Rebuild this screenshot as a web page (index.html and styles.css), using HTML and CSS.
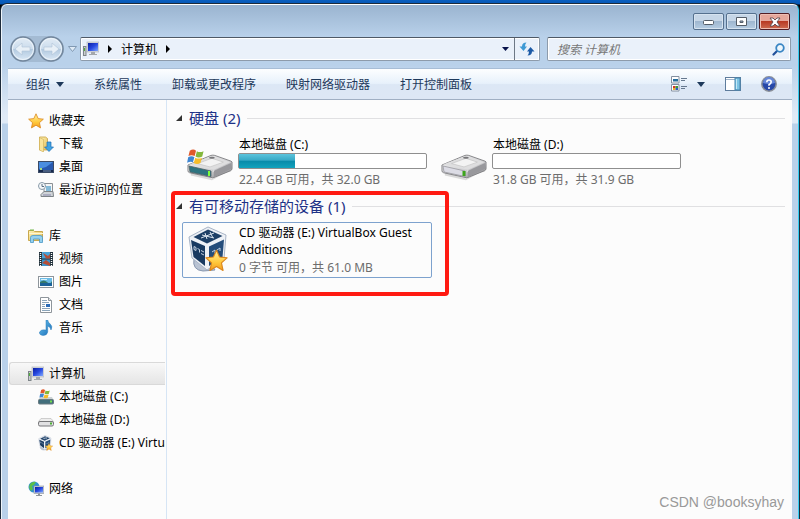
FILE: index.html
```html
<!DOCTYPE html>
<html lang="zh-CN">
  <head>
    <meta charset="UTF-8" />
    <meta name="viewport" content="width=device-width, initial-scale=1.0" />
    <title>计算机</title>
    <link rel="stylesheet" href="styles.css">
  </head>

  <body>
    <!-- shared icons -->
    <svg class="defs" width="0" height="0" aria-hidden="true">
      <defs>
        <linearGradient id="g-metal" x1="0" y1="0" x2="1" y2="1">
          <stop offset="0" stop-color="#f7f7f7" />
          <stop offset=".6" stop-color="#d0d0d2" />
          <stop offset="1" stop-color="#77777b" />
        </linearGradient>
        <linearGradient id="g-screen" x1="0" y1="0" x2="1" y2="1">
          <stop offset="0" stop-color="#0c1fa0" />
          <stop offset=".5" stop-color="#2748e0" />
          <stop offset="1" stop-color="#7fa8ff" />
        </linearGradient>
        <linearGradient id="g-star" x1="0" y1="0" x2="0" y2="1">
          <stop offset="0" stop-color="#fff0a0" />
          <stop offset=".6" stop-color="#ffc93c" />
          <stop offset="1" stop-color="#f39a1e" />
        </linearGradient>
        <linearGradient id="g-circle" x1="0" y1="0" x2="0" y2="1">
          <stop offset="0" stop-color="#e4edf6" />
          <stop offset=".48" stop-color="#cbdcec" />
          <stop offset=".52" stop-color="#b3cae0" />
          <stop offset="1" stop-color="#dbe9f6" />
        </linearGradient>
        <linearGradient id="g-folder" x1="0" y1="0" x2="1" y2="1">
          <stop offset="0" stop-color="#fff3b8" />
          <stop offset="1" stop-color="#e3bd55" />
        </linearGradient>
        <linearGradient id="g-blue" x1="0" y1="0" x2="1" y2="1">
          <stop offset="0" stop-color="#6cc8f2" />
          <stop offset="1" stop-color="#1668b4" />
        </linearGradient>
      </defs>
      <symbol id="i-computer" viewBox="0 0 16 16">
        <rect x=".5" y="5.500" width="2.500" height="9" fill="#c9cdd0" stroke="#7e8589" />
        <rect x="1" y="7" width="1" height="3" fill="#4fae3c" />
        <rect x="4" y="1" width="12" height="10" fill="#d8dade" stroke="#aab0b8" stroke-width=".6" />
        <rect x="5" y="2" width="10" height="8" fill="url(#g-screen)" />
        <path d="M8 11h4v2h2v1H6v-1h2z" fill="#a4a8ad" />
      </symbol>
      <symbol id="i-flag" viewBox="0 0 20 18">
        <path d="M3 2q4-3 7 0L8.500 8Q5 6 1.500 8z" fill="#e0592a" />
        <path d="M11 2.500q3 2 7.500 0L17 8.500q-4 2-7.500 0z" fill="#84b83c" />
        <path d="M1.200 9.200q4-2 7 0L6.500 15Q4 13.500 0 15.500z" fill="#3f86d2" />
        <path d="M9.200 9.800q3.500 2 7.500 0L15 15.800q-4 2-7.500 0z" fill="#f6bd2a" />
      </symbol>
      <symbol id="i-drive" viewBox="0 0 48 32">
        <path d="M4 24l22 6 20-11v2L26 32 4 27z" fill="#999" opacity=".35" />
        <path d="M1 16 25 6q2-.6 4 0l17 6q1.500.6 1 2v6q0 1-1.500 2L28 29q-1.500.6-3 0L2.500 24Q1 23.500 1 22z" fill="url(#g-metal)" stroke="#77777a" stroke-width=".9" />
        <path d="M2 15.500 26 6.500l19 6.500-17 8z" fill="#dededf" />
        <path d="M11 14.500 26 9l12 4-14 5z" fill="#f3f3f3" stroke="#bdbdbd" stroke-width=".6" />
        <path d="M34 20.500q-2 1-7 2" fill="none" stroke="#fff" />
        <ellipse cx="26" cy="8.500" rx="3" ry="1" fill="#77777a" />
        <path d="M46 14v6l-18 9v-7z" fill="#98989c" />
      </symbol>
      <symbol id="i-box" viewBox="0 0 40 48">
        <path d="M6 33Q4 44 15 45l12-1-2-3-8-1z" fill="#b9c3d3" stroke="#8897af" />
        <path d="M1 11 20 1l18 8-2 24-17 11L4 32z" fill="#eef1f6" stroke="#a8b4c6" />
        <path d="M5.500 11 20 3.500 34.500 10 19 17.500z" fill="#1d3f66" />
        <path d="M3 14 17 20v20L5.500 31z" fill="#193a61" />
        <path d="M21 20.500 36 13.500l-1.500 18L21 40z" fill="#244d7b" />
        <path d="M14 9l12 3M13 12l13-5M17 7l2 6M22 6l3 6" stroke="#dce5ef" fill="none" />
        <path d="M6 20.500l2 1v3l-2-1zM9.500 22.500l2 1v3M13 24.500l3 1.500M13 27.500l3 1.500M24 26l3-2v3M29 24l3-2v3" stroke="#c3d0e0" fill="none" />
      </symbol>
      <symbol id="i-star" viewBox="0 0 20 20">
        <path d="M10 1l2.700 6 6.500.7-4.900 4.400 1.400 6.500L10 15.300l-5.700 3.300 1.400-6.500L.8 7.700l6.500-.7z" fill="url(#g-star)" stroke="#dc861c" stroke-linejoin="round" />
      </symbol>
    </svg>

    <div class="window">
      <header class="titlebar">
        <button class="caption-btn" aria-label="最小化">
          <svg width="12" height="6" viewBox="0 0 12 6"><rect x=".5" y="1.500" width="10" height="4" rx="1" fill="#fff" stroke="#545d68" /></svg>
        </button>
        <button class="caption-btn" aria-label="最大化">
          <svg width="12" height="10" viewBox="0 0 12 10"><path d="M.5.500h10v8H.5zM4 4v1.500h3V4z" fill="#fff" fill-rule="evenodd" stroke="#545d68" /></svg>
        </button>
        <button class="caption-btn close" aria-label="关闭">
          <svg width="12" height="10" viewBox="0 0 12 10"><path d="M1 1h3l2 2 2-2h3L8 5l3 4H8L6 7 4 9H1l3-4z" fill="#fff" stroke="#5c4a50" stroke-width=".9" /></svg>
        </button>
      </header>

      <div class="navbar">
        <div class="history">
          <button aria-label="后退">
            <svg width="26" height="26" viewBox="0 0 26 26"><circle cx="13" cy="13" r="12" fill="url(#g-circle)" stroke="#72869c" stroke-width="1.500" /><circle cx="13" cy="13" r="10.500" fill="none" stroke="#edf4fa" /><path d="M5 13l7-6v4h8v4h-8v4z" fill="#e8f0f7" stroke="#aec2d6" stroke-width=".6" /></svg>
          </button>
          <button aria-label="前进">
            <svg width="26" height="26" viewBox="0 0 26 26"><circle cx="13" cy="13" r="12" fill="url(#g-circle)" stroke="#72869c" stroke-width="1.500" /><circle cx="13" cy="13" r="10.500" fill="none" stroke="#edf4fa" /><path d="M21 13l-7-6v4H6v4h8v4z" fill="#e8f0f7" stroke="#aec2d6" stroke-width=".6" /></svg>
          </button>
        </div>
        <button class="recent" aria-label="最近页面">
          <svg width="9" height="6" viewBox="0 0 9 6"><path d="M.5.500h8L4.500 5.500z" fill="#dfeaf5" stroke="#8199b3" /></svg>
        </button>
        <div class="address">
          <svg class="icon16" viewBox="0 0 16 16"><use href="#i-computer" /></svg>
          <svg class="crumb-arrow" viewBox="0 0 4 8"><path d="M0 0l4 4-4 4z" /></svg>
          <a href="#">计算机</a>
          <svg class="crumb-arrow" viewBox="0 0 4 8"><path d="M0 0l4 4-4 4z" /></svg>
          <button class="drop" aria-label="以前的位置"><svg width="7" height="4" viewBox="0 0 7 4"><path d="M0 0h7L3.500 4z" fill="#07124a" /></svg></button>
          <button class="refresh" aria-label="刷新">
            <svg width="16" height="14" viewBox="0 0 16 14"><path d="M7.500.500Q3 .5 3 4.500H.5l4 4.500 3.500-4.500H6q0-2.500 1.500-4z" fill="#3f9ad4" /><path d="M8.500 13.500q4.500 0 4.500-4h2.500l-4-4.500L8 9.500h2q0 2.500-1.500 4z" fill="#1c5aa6" /></svg>
          </button>
        </div>
        <div class="search">
          <input type="search" placeholder="搜索 计算机" aria-label="搜索 计算机">
          <svg width="13" height="13" viewBox="0 0 13 13"><path d="M1.500 11.500L5.500 7.500" stroke="#22509a" stroke-width="2.200" stroke-linecap="round" /><circle cx="8" cy="5" r="3.800" fill="#eef7fd" stroke="#3a86c4" stroke-width="1.800" /></svg>
        </div>
      </div>

      <div class="toolbar">
        <button>组织 <svg class="tri" viewBox="0 0 8 5"><path d="M0 0h8L4 5z" /></svg></button>
        <button>系统属性</button>
        <button>卸载或更改程序</button>
        <button>映射网络驱动器</button>
        <button>打开控制面板</button>
        <div class="tools">
          <button class="view" aria-label="更改您的视图">
            <svg width="17" height="16" viewBox="0 0 17 16"><path d="M.5.500h7.500v6.500H.5zM.5 8.500h7.500V15H.5z" fill="#fff" stroke="#8490a0" /><path d="M2 3h5v2.500H2z" fill="#246c9c" /><path d="M2 10h2.500v2H2z" fill="#d83228" /><path d="M4.500 10H7v2H4.500z" fill="#3c9a38" /><path d="M2 12h2.500v2H2z" fill="#e9b52a" /><path d="M4.500 12H7v2H4.500z" fill="#2f5cc2" /><path d="M10 2.500h6M10 4.500h4M10 10.500h6M10 12.500h4" stroke="#66788e" /></svg>
            <svg class="tri" viewBox="0 0 8 5"><path d="M0 0h8L4 5z" /></svg>
          </button>
          <button aria-label="预览窗格">
            <svg width="16" height="14" viewBox="0 0 16 14"><rect x=".5" y=".5" width="15" height="13" fill="#fff" stroke="#5e7c9c" /><path d="M1 2.500h9" stroke="#9fb4ca" /><rect x="10" y="1" width="5" height="12" fill="#7cc4e4" stroke="#4785ae" /><path d="M11.500 2v10" stroke="#c3e8f6" /></svg>
          </button>
          <button aria-label="帮助">
            <svg width="16" height="16" viewBox="0 0 16 16"><circle cx="8" cy="8" r="7.200" fill="#2748a8" stroke="#8b9098" stroke-width="1.500" /><path d="M2 7a6 6 0 0 1 12 0Q8 9 2 7z" fill="#6687d8" /><path d="M5.800 6.200Q5.800 4 8 4t2.200 2Q10.200 7.500 8 8.800v.9" fill="none" stroke="#fff" stroke-width="1.600" /><circle cx="8" cy="12" r="1" fill="#fff" /></svg>
          </button>
        </div>
      </div>

      <div class="content">
        <nav class="sidebar">
          <ul>
            <li><a href="#"><svg class="icon16" viewBox="0 0 20 20"><use href="#i-star" /></svg>收藏夹</a></li>
            <li class="child"><a href="#">
              <svg class="icon16" viewBox="0 0 16 16"><path d="M1.500 1h6l2 1.500V14H1.500z" fill="url(#g-folder)" stroke="#c8a243" stroke-width=".8" /><path d="M1.500 1.500l4 2V16l-4-2z" fill="#f9e49a" stroke="#cfae56" stroke-width=".6" /><path d="M9 6h4v5h2.500l-4.500 4.500L6.500 11H9z" fill="#41a3e2" stroke="#1e6fb4" stroke-width=".7" /></svg>下载</a></li>
            <li class="child"><a href="#">
              <svg class="icon16" viewBox="0 0 16 16"><rect x=".5" y="2.500" width="15" height="11" fill="#2759b0" stroke="#3b4b66" /><path d="M1 3h14L8 8l-7 2z" fill="#4a8ee0" /><path d="M1 11h14v2H1z" fill="#17294d" /><rect x="2" y="9" width="2" height="2" fill="#a7dc82" /><path d="M5 12h8" stroke="#7d96b8" /></svg>桌面</a></li>
            <li class="child"><a href="#">
              <svg class="icon16" viewBox="0 0 16 16"><path d="M6 1.500h8.500v10H6z" fill="#f4f5f6" stroke="#8b9095" /><path d="M8 4h5v5H8z" fill="#85bad8" /><path d="M3 12.500l3-3h9l.5 5H3z" fill="#d0d4d8" stroke="#7d8388" /><path d="M5 13h8" stroke="#88a" /><circle cx="4" cy="4" r="3.500" fill="#f5f8fa" stroke="#899aa8" /><path d="M4 2v2.500h2" fill="none" stroke="#596d80" /></svg>最近访问的位置</a></li>
          </ul>
          <ul>
            <li><a href="#">
              <svg class="icon16" viewBox="0 0 16 16"><path d="M.5 2.500h5l1 1h8v9H.5z" fill="url(#g-folder)" stroke="#c9a84c" /><path d="M2 1.500h4v1H2z" fill="#70b64a" /><path d="M1 5.500h14" stroke="#fff6cf" /><path d="M2.500 14.500v-5Q2.500 7.500 5 7.500h7q2.500 0 2.500 2v5h-3v-3.500h-6v3.500z" fill="#94d0ee" stroke="#4a98c8" stroke-width=".8" /></svg>库</a></li>
            <li class="child"><a href="#">
              <svg class="icon16" viewBox="0 0 16 16"><path d="M1 1h14v14H1z" fill="#20303a" /><path d="M4 1h8v6.500H4z" fill="#4aa3d8" /><path d="M4 8.500h8V15H4z" fill="#3e92ca" /><path d="M5 2l5 3 2-2v4.500H8zM4 12l4-3 4 3v3z" fill="#b44e37" /><path d="M2.500 2v13M13.500 2v13" stroke="#fff" stroke-width="1.400" stroke-dasharray="1 1" /></svg>视频</a></li>
            <li class="child"><a href="#">
              <svg class="icon16" viewBox="0 0 16 16"><rect x=".5" y="2.500" width="15" height="11" fill="#fff" stroke="#8e959b" /><path d="M2 4h12v8H2z" fill="#6bbbe5" /><path d="M2 8q4-3 7 0t5-1v2H2z" fill="#33786a" /><path d="M2 9h12v3H2z" fill="#1c6298" /><path d="M3 5h6v1H3z" fill="#d7f1fb" /></svg>图片</a></li>
            <li class="child"><a href="#">
              <svg class="icon16" viewBox="0 0 16 16"><path d="M2.500.500h8l3 3v12h-11z" fill="#fff" stroke="#8e959b" /><path d="M10.500.500v3h3" fill="#e2e6e9" stroke="#8e959b" /><path d="M4 3.500h5M4 5.500h7M4 7.500h3M4 9.500h3M4 11.500h8M4 13.500h8" stroke="#8ba5ba" /><path d="M8 7h4v3H8z" fill="#2c6cb8" /></svg>文档</a></li>
            <li class="child"><a href="#">
              <svg class="icon16" viewBox="0 0 16 16"><path d="M8 0h1.700q.3 2.500 2.500 4 2.800 2.500.8 6-.3-3-3.300-4v6Q9 15.500 5 15.500 1 15 1.500 12 3 9 8 10z" fill="url(#g-blue)" stroke="#2c7cba" stroke-width=".5" /></svg>音乐</a></li>
          </ul>
          <ul>
            <li><a href="#" class="selected"><svg class="icon16" viewBox="0 0 16 16"><use href="#i-computer" /></svg>计算机</a></li>
            <li class="child"><a href="#">
              <svg class="icon16" viewBox="0 0 16 16"><path d="M2 8h12l1.500 3H.5z" fill="#ccd2d4" /><rect x=".5" y="10.500" width="15" height="4.500" rx="1" fill="#426e7c" stroke="#697b81" /><rect x="12" y="11.500" width="2" height="2" fill="#72e04c" /><use href="#i-flag" x="1" y="0" width="12" height="10" /></svg>本地磁盘 (C:)</a></li>
            <li class="child"><a href="#">
              <svg class="icon16" viewBox="0 0 16 16"><path d="M3 6.500h10l2.500 3H.5z" fill="#eee" stroke="#b4b4b4" stroke-width=".6" /><rect x=".5" y="9.500" width="15" height="4.500" rx="1.500" fill="#e1e1e3" stroke="#77777a" /><rect x="12" y="10.500" width="2" height="2" fill="#4cae34" /></svg>本地磁盘 (D:)</a></li>
            <li class="child"><a href="#">
              <svg class="icon16" viewBox="0 0 16 16"><use href="#i-box" x="0" y="0" width="14" height="16" /><use href="#i-star" x="7" y="8" width="8" height="8" /></svg>CD 驱动器 (E:) VirtualBox Guest Additions</a></li>
          </ul>
          <ul>
            <li><a href="#">
              <svg class="icon16" viewBox="0 0 16 16"><circle cx="6" cy="6" r="5.500" fill="#2c92cf" /><path d="M2 3q3-3 6-2L6 4 4 5l1 3-2 2Q0 7 2 3z" fill="#5cbf48" /><rect x="6" y="5" width="10" height="7.500" fill="#cdd1d6" stroke="#8b939c" stroke-width=".6" /><rect x="7" y="6" width="8" height="5.500" fill="url(#g-screen)" /><path d="M10 12.500h2v1.500h2v1H8v-1h2z" fill="#8d949b" /></svg>网络</a></li>
          </ul>
        </nav>

        <main class="files">
          <section class="group">
            <h2><svg class="expand" viewBox="0 0 6 6"><path d="M6 0v6H0z" /></svg>硬盘 (2)</h2>
            <div class="tiles">
              <a href="#" class="tile">
                <svg class="tile-icon" viewBox="0 0 48 48"><use href="#i-drive" x="0" y="11" width="46" height="32" /><path d="M2 28l22 5v5.500L3 34z" fill="#2d7480" stroke="#4b5f65" stroke-width=".8" /><path d="M22 33v5" stroke="#7dff3c" stroke-width="2" /><use href="#i-flag" x="0" y="11" width="18" height="16" /></svg>
                <span class="info">
                  <span class="name">本地磁盘 (C:)</span>
                  <span class="bar"><span class="fill" style="width: 30%"></span></span>
                  <span class="detail">22.4 GB 可用，共 32.0 GB</span>
                </span>
              </a>
              <a href="#" class="tile">
                <svg class="tile-icon" viewBox="0 0 48 48"><use href="#i-drive" x="0" y="11" width="46" height="32" /><path d="M2 28l22 5v5.500L3 34z" fill="#dcdce5" stroke="#98989e" stroke-width=".8" /><path d="M23 33v5" stroke="#3da51c" stroke-width="3" /></svg>
                <span class="info">
                  <span class="name">本地磁盘 (D:)</span>
                  <span class="bar"></span>
                  <span class="detail">31.8 GB 可用，共 31.9 GB</span>
                </span>
              </a>
            </div>
          </section>
          <section class="group marked">
            <h2><svg class="expand" viewBox="0 0 6 6"><path d="M6 0v6H0z" /></svg>有可移动存储的设备 (1)</h2>
            <div class="tiles">
              <a href="#" class="tile focused">
                <svg class="tile-icon" viewBox="0 0 48 48"><use href="#i-box" x="1" y="0" width="40" height="48" /><use href="#i-star" x="18" y="23" width="23" height="23" /></svg>
                <span class="info">
                  <span class="name">CD 驱动器 (E:) VirtualBox Guest Additions</span>
                  <span class="detail">0 字节 可用，共 61.0 MB</span>
                </span>
              </a>
            </div>
          </section>
        </main>
      </div>
      <p class="watermark">CSDN @booksyhay</p>
    </div>
  </body>
</html>
```
FILE: styles.css
```css
*,
*::before,
*::after {
  box-sizing: border-box;
}

body {
  margin: 0;
  padding: 4px 1px 0;
  min-height: 100vh;
  display: flex;
  background: linear-gradient(#0a5fc0 0, #0657b4 4px, #000 5px, #000);
  font: 12px/17px "Noto Sans", "Noto Sans CJK SC", sans-serif;
  color: #000;
}

button {
  border: 0;
  padding: 0;
  background: none;
  font: inherit;
  color: inherit;
  display: flex;
  align-items: center;
}

a {
  color: inherit;
  text-decoration: none;
}

svg {
  flex: none;
}

.defs {
  position: absolute;
}

.icon16 {
  width: 16px;
  height: 16px;
}

/* window frame */
.window {
  position: relative;
  flex: 1;
  min-width: 0;
  display: flex;
  flex-direction: column;
  padding: 0 6px;
  border: 1px solid #eef5fb;
  border-top-color: #fff;
  border-right-color: #35cdf2;
  border-bottom: 0;
  border-radius: 6px 6px 0 0;
  box-shadow: 0 0 0 1px #1d2b3b;
  background: linear-gradient(#9ab4d0, #b9d1ea 32px, #b9d1ea 60px, #dfeaf6 110px, #dfeaf6 118px, #b9d1ea 119px);
}

.titlebar {
  display: flex;
  justify-content: flex-end;
  gap: 2px;
  height: 31px;
  padding: 8px 2px 0;
}

.caption-btn {
  width: 31px;
  height: 17px;
  justify-content: center;
  border: 1px solid #55708e;
  border-radius: 2px;
  background: linear-gradient(#c6d6e7 45%, #9fb7d0 50%, #b6cde3);
  box-shadow: inset 0 0 0 1px #d6e3f0;
}

.close {
  border-color: #521d24;
  background: linear-gradient(#e5a79b 45%, #b83a24 50%, #ce6b50);
  box-shadow: inset 0 0 0 1px #eebdb2;
}

.navbar {
  display: flex;
  align-items: center;
  gap: 4px;
  padding: 0 1px 6px 2px;
}

.history {
  display: flex;
  gap: 2px;
  border-radius: 14px;
  background: #a4bbd3;
}

.recent {
  width: 8px;
}

.address,
.search {
  display: flex;
  align-items: center;
  height: 24px;
  border: 1px solid #8d9bab;
  border-top-color: #4e5966;
  border-radius: 2px;
  background: #eaf1fa;
  box-shadow: inset 0 0 0 1px #fff;
}

.address {
  flex: 2 1 0;
  gap: 9px;
  padding-left: 2px;
}

.crumb-arrow {
  width: 4px;
  height: 8px;
}

.drop {
  margin-left: auto;
}

.drop,
.refresh {
  height: 22px;
}

.refresh {
  width: 25px;
  margin-left: -4px;
  justify-content: center;
  border-left: 1px solid #6d7885;
}

.search {
  flex: 1 1 0;
  margin-left: 3px;
  padding: 0 5px 0 9px;
}

.search input {
  flex: 1;
  min-width: 0;
  border: 0;
  padding: 0;
  outline: 0;
  background: none;
  font: inherit;
  font-style: italic;
}

.search input::placeholder {
  color: #777;
}

.toolbar {
  display: flex;
  align-items: center;
  gap: 30px;
  height: 32px;
  padding: 0 15px 0 18px;
  border-top: 1px solid #a7bdd6;
  border-bottom: 1px solid #a0afc3;
  background: linear-gradient(#fdfeff, #e7f1fb 48%, #dce7f5 52%, #dde7f5);
  color: #1e395b;
}

.toolbar button {
  gap: 6px;
}

.tri {
  width: 8px;
  height: 5px;
  fill: #1e395b;
}

.tools {
  display: flex;
  align-items: center;
  gap: 20px;
  margin-left: auto;
}

.tools .view {
  gap: 9px;
}

.content {
  flex: 1;
  display: flex;
  background: #fcfcfc;
}

/* navigation pane */
.sidebar {
  width: 159px;
  flex: none;
  padding: 9px 1px 0;
  border-right: 1px solid #d6e5f5;
}

.sidebar ul {
  list-style: none;
  margin: 0;
  padding: 0;
}

.sidebar ul + ul {
  margin-top: 23px;
}

.sidebar a {
  display: flex;
  align-items: center;
  gap: 5px;
  height: 23px;
  padding-left: 19px;
  overflow: hidden;
  white-space: nowrap;
}

.sidebar .child a {
  padding-left: 29px;
}

.sidebar a.selected {
  padding-left: 18px;
  border: 1px solid #d9d9d9;
  border-right: 0;
  border-radius: 3px 0 0 3px;
  background: linear-gradient(#f8f8f8, #e5e5e5);
}

/* file list */
.files {
  flex: 1;
  min-width: 0;
  padding: 8px 7px 0 9px;
}

.group {
  position: relative;
  margin-bottom: 6px;
}

.group h2 {
  display: flex;
  align-items: center;
  gap: 7px;
  margin: 0 0 6px;
  font-size: 15px;
  line-height: 20px;
  font-weight: normal;
  color: #1e3287;
}

.group h2::after {
  content: "";
  flex: 1;
  border-top: 1px solid #e0e0e2;
}

.expand {
  width: 6px;
  height: 6px;
  fill: #333;
}

.tiles {
  display: flex;
  flex-wrap: wrap;
  gap: 4px;
  padding: 0 6px;
}

.tile {
  display: flex;
  gap: 4px;
  width: 250px;
  min-height: 56px;
  padding: 1px 4px;
  border: 1px solid transparent;
  border-radius: 2px;
}

.focused {
  border-color: #7da2ce;
}

.tile-icon {
  width: 48px;
  height: 48px;
  margin-top: 2px;
}

.info {
  flex: 1;
  min-width: 0;
  display: flex;
  flex-direction: column;
}

.bar {
  height: 16px;
  margin: 0 0 1px -1px;
  border: 1px solid #8f8f8f;
  border-radius: 2px;
  background: #fff;
}

.fill {
  display: block;
  height: 100%;
  background: linear-gradient(#5cc4dd, #37a9c6 45%, #098aa9 50%, #13a3bd);
}

.detail {
  padding-top: 1px;
  color: #6d6d6d;
}

/* red box drawn round the removable devices */
.marked::before {
  content: "";
  position: absolute;
  top: -5px;
  left: -5px;
  width: 278px;
  height: 105px;
  border: 4px solid #ff1a12;
  border-radius: 4px;
}

.watermark {
  position: absolute;
  right: 14px;
  bottom: 8px;
  margin: 0;
  font: 14px/18px "Liberation Sans", sans-serif;
  color: #999;
}
```
